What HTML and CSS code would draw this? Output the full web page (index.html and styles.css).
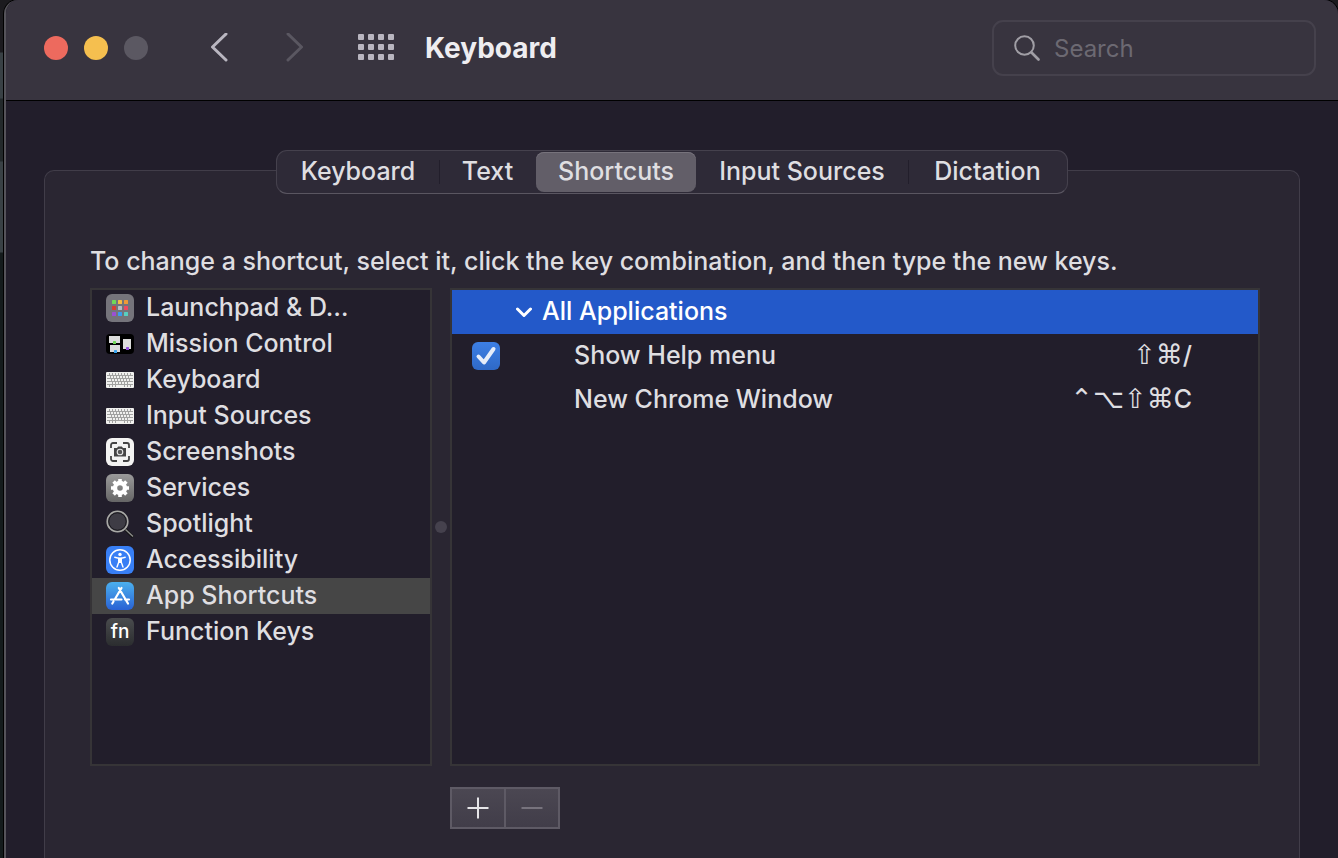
FILE: index.html
```
<!DOCTYPE html>
<html lang="en">
<head>
<meta charset="utf-8">
<title>Keyboard</title>
<link rel="stylesheet" href="styles.css">
</head>
<body>
<div class="window">
  <header class="titlebar">
    <div class="lights">
      <button class="light close" aria-label="Close"></button>
      <button class="light minimize" aria-label="Minimize"></button>
      <button class="light zoom" aria-label="Zoom" disabled></button>
    </div>
    <nav class="history">
      <button class="nav-btn" aria-label="Back"><svg width="20" height="30" viewBox="0 0 20 30"><path d="M17 1 3.500 14 17 27"/></svg></button>
      <button class="nav-btn forward" aria-label="Forward" disabled><svg width="20" height="30" viewBox="0 0 20 30"><path d="M3 1 16.500 14 3 27"/></svg></button>
    </nav>
    <button class="show-all" aria-label="Show all">
      <svg width="36" height="28" viewBox="0 0 36 28">
        <g id="dots"><rect width="6" height="6" rx="1"/><rect x="10" width="6" height="6" rx="1"/><rect x="20" width="6" height="6" rx="1"/><rect x="30" width="6" height="6" rx="1"/></g>
        <use href="#dots" y="10"/><use href="#dots" y="20"/>
      </svg>
    </button>
    <h1 class="title">Keyboard</h1>
    <label class="search">
      <svg width="26" height="26" viewBox="0 0 26 26"><circle cx="10.500" cy="10.500" r="9.300"/><path d="m17.500 17.500 7 7" stroke-width="2.600"/></svg>
      <input type="search" placeholder="Search" aria-label="Search">
    </label>
  </header>

  <main class="content">
    <section class="panel">
      <div class="tabs" role="tablist">
        <button class="tab" role="tab">Keyboard</button>
        <button class="tab divided" role="tab">Text</button>
        <button class="tab active" role="tab" aria-selected="true">Shortcuts</button>
        <button class="tab" role="tab">Input Sources</button>
        <button class="tab divided" role="tab">Dictation</button>
      </div>
      <p class="hint">To change a shortcut, select it, click the key combination, and then type the new keys.</p>

      <div class="split">
        <ul class="categories">
          <li class="category">
            <svg class="icon" viewBox="0 0 28 28"><rect width="28" height="28" rx="6" fill="#75747b"/>
              <rect x="6" y="6" width="4" height="4" rx=".5" fill="#70d957"/><rect x="12" y="6" width="4" height="4" rx=".5" fill="#f5bd43"/><rect x="18" y="6" width="4" height="4" rx=".5" fill="#f09a38"/>
              <rect x="6" y="12" width="4" height="4" rx=".5" fill="#d73c32"/><rect x="12" y="12" width="4" height="4" rx=".5" fill="#b9bcc4"/><rect x="18" y="12" width="4" height="4" rx=".5" fill="#ee4863"/>
              <rect x="6" y="18" width="4" height="4" rx=".5" fill="#9b50d4"/><rect x="12" y="18" width="4" height="4" rx=".5" fill="#3a9ef0"/><rect x="18" y="18" width="4" height="4" rx=".5" fill="#58cfc0"/></svg>
            <span>Launchpad &amp; D…</span></li>
          <li class="category">
            <svg class="icon" viewBox="0 0 28 28"><rect y="4" width="28" height="20" rx="4" fill="#000"/>
              <path d="M3 6h11v7H3zM4 15h10v7H4zM17 9h8v10h-8z" fill="#dcdcdc"/>
              <rect x="7" y="11" width="3" height="3" rx=".5" fill="#70d957"/><rect x="8" y="20" width="3" height="3" rx=".5" fill="#3aa4ee"/><rect x="20" y="17" width="3" height="3" rx=".5" fill="#9350dc"/></svg>
            <span>Mission Control</span></li>
          <li class="category">
            <svg class="icon" viewBox="0 0 28 28">
              <g id="kbd"><rect y="6" width="28" height="16" rx="1" fill="#f0f0ee"/>
              <g stroke="#8d8d8c" fill="none"><path d="M1 9.500h26M1 12.500h26M1 15.500h26M1 18.500h26" stroke-width=".8"/>
              <path d="M3.500 7v2M6.500 7v2M9.500 7v2M12.500 7v2M15.500 7v2M18.500 7v2M21.500 7v2M24.500 7v2M4.500 10v2M7.500 10v2M10.500 10v2M13.500 10v2M16.500 10v2M19.500 10v2M22.500 10v2M5.500 13v2M8.500 13v2M11.500 13v2M14.500 13v2M17.500 13v2M20.500 13v2M23.500 13v2M6.500 16v2M9.500 16v2M12.500 16v2M15.500 16v2M18.500 16v2M21.500 16v2M3.500 19v2M6.500 19v2M9.500 19v2M18.500 19v2M21.500 19v2M24.500 19v2" stroke-width=".8"/></g></g></svg>
            <span>Keyboard</span></li>
          <li class="category">
            <svg class="icon" viewBox="0 0 28 28"><use href="#kbd"/></svg>
            <span>Input Sources</span></li>
          <li class="category">
            <svg class="icon" viewBox="0 0 28 28"><rect width="28" height="28" rx="6" fill="#f3f3f2"/>
              <path d="M5 10V7a2 2 0 0 1 2-2h4M17 5h4a2 2 0 0 1 2 2v3M23 18v3a2 2 0 0 1-2 2h-4M11 23H7a2 2 0 0 1-2-2v-3" fill="none" stroke="#444" stroke-width="1.800"/>
              <path d="M8 10h3l1.200-1.500h3.600l1.200 1.500h3v8.500H8z" fill="#444"/><circle cx="14" cy="14" r="2.800" fill="#555" stroke="#e8e8e8" stroke-width="1.100"/></svg>
            <span>Screenshots</span></li>
          <li class="category">
            <svg class="icon" viewBox="0 0 28 28"><defs><linearGradient id="gray" x2="0" y2="1"><stop stop-color="#9a9a9a"/><stop offset="1" stop-color="#666"/></linearGradient></defs>
              <rect width="28" height="28" rx="6" fill="url(#gray)"/>
              <circle cx="14" cy="14" r="5" fill="none" stroke="#fff" stroke-width="4.400"/>
              <path d="M14 5v3M14 20v3M5 14h3M20 14h3M7.600 7.600l2.200 2.200M18.200 18.200l2.200 2.200M20.400 7.600l-2.200 2.200M9.800 18.200l-2.200 2.200" stroke="#fff" stroke-width="3.600"/></svg>
            <span>Services</span></li>
          <li class="category">
            <svg class="icon" viewBox="0 0 28 28"><path d="m19 19 8 8" stroke="#111" stroke-width="3"/><path d="m19.500 19.500 7.500 7" stroke="#8a8a88" stroke-width="1.500"/>
              <circle cx="11.500" cy="11.500" r="10.300" fill="#3e3c45" stroke="#a9a9a6" stroke-width="1.600"/><circle cx="11.500" cy="11.500" r="8.700" fill="none" stroke="#19181d"/></svg>
            <span>Spotlight</span></li>
          <li class="category">
            <svg class="icon" viewBox="0 0 28 28"><rect width="28" height="28" rx="6" fill="#387ff5"/>
              <circle cx="14" cy="14" r="10.200" fill="none" stroke="#fff" stroke-width="1.500"/><circle cx="14" cy="8.400" r="1.700" fill="#fff"/>
              <path d="m8.800 11.300 4 .9v3.800l-1.800 5M19.200 11.300l-4 .9v3.800l1.800 5" fill="none" stroke="#fff" stroke-width="1.400" stroke-linecap="round"/><path d="M12.200 11.500h3.600V17h-3.600z" fill="#fff"/></svg>
            <span>Accessibility</span></li>
          <li class="category selected">
            <svg class="icon" viewBox="0 0 28 28"><defs><linearGradient id="sky" x2="0" y2="1"><stop stop-color="#4bb0ee"/><stop offset="1" stop-color="#2962d4"/></linearGradient></defs>
              <rect width="28" height="28" rx="6" fill="url(#sky)"/>
              <path d="M12.800 6l9.200 15.500M15.500 6 9 17M5 17.500h10.500M19 17.500h4M7.500 19.500l-1.200 2" fill="none" stroke="#fff" stroke-width="2.200" stroke-linecap="round"/></svg>
            <span>App Shortcuts</span></li>
          <li class="category"><span class="icon fn">fn</span><span>Function Keys</span></li>
        </ul>

        <div class="divider"></div>

        <div class="detail">
          <table class="shortcuts">
            <colgroup><col class="col-check"><col class="col-name"><col class="col-keys"></colgroup>
            <tbody>
              <tr class="group"><td></td><td colspan="2"><div class="group-name"><svg width="16" height="14" viewBox="0 0 16 14"><path d="m1.500 5 6.500 6.500 6.500-6.500"/></svg><span>All Applications</span></div></td></tr>
              <tr><td><input class="check" id="help" type="checkbox" checked></td><td class="name"><label for="help">Show Help menu</label></td><td class="keys"><span class="sym">⇧⌘</span>/</td></tr>
              <tr><td></td><td class="name">New Chrome Window</td><td class="keys"><span class="sym">⌃⌥⇧⌘</span>C</td></tr>
            </tbody>
          </table>
        </div>

        <div class="actions">
          <button class="action" aria-label="Add"><svg width="22" height="22" viewBox="0 0 22 22"><path d="M11 0.500v21M0.500 11h21"/></svg></button>
          <button class="action" aria-label="Remove" disabled><svg width="22" height="22" viewBox="0 0 22 22"><path d="M0.500 11h21"/></svg></button>
        </div>
      </div>
    </section>
  </main>
</div>
</body>
</html>
```
FILE: styles.css
```
* { box-sizing: border-box; }
body {
  margin: 0;
  height: 100vh;
  overflow: hidden;
  padding-left: 4px;
  background: linear-gradient(#1c1b1f 52px, #394145 53px, #394145 98px, #23292b 99px, #23292b 161px, #394145 162px, #394145 252px, #141b1c 253px);
  font: 500 25px/36px Inter, "Liberation Sans", sans-serif;
  color: #dfdee1;
}
button { font: inherit; color: inherit; border: 0; padding: 0; background: none; }
svg { display: block; }

.window {
  display: flex;
  flex-direction: column;
  height: 100%;
  border-left: 2px solid #55535a;
  border-radius: 14px 14px 0 0;
  box-shadow: 0 0 0 1px #000;
  background: #221e2b;
  overflow: hidden;
}

.titlebar {
  display: flex;
  align-items: center;
  height: 101px;
  flex: none;
  padding: 0 22px 4px 38px;
  background: #38343f;
  border-bottom: 1px solid #000;
}
.lights { display: flex; gap: 16px; }
.light { width: 24px; height: 24px; border-radius: 50%; }
.close { background: #ed6a5e; }
.minimize { background: #f5bf4f; }
.zoom { background: #5b5862; }
.history { display: flex; gap: 56px; margin-left: 61px; }
.nav-btn svg { fill: none; stroke: #b9b6c0; stroke-width: 3; stroke-linecap: round; stroke-linejoin: round; }
.forward svg { stroke: #5a5761; }
.show-all { margin-left: 53px; }
.show-all svg { fill: #b9b6c0; }
.title { margin: 0 auto 0 31px; font-size: 28px; font-weight: 700; color: #eeedf0; }
.search {
  display: flex;
  align-items: center;
  gap: 14px;
  width: 324px;
  height: 56px;
  padding: 0 20px;
  border: 2px solid #45414c;
  border-radius: 11px;
}
.search svg { flex: none; fill: none; stroke: #a09ea5; stroke-width: 2; stroke-linecap: round; }
.search input { width: 100%; min-width: 0; padding: 2px 0 0; border: 0; outline: 0; background: none; font: inherit; font-size: 24px; font-weight: 400; color: #dfdee1; }
.search input::placeholder { color: #6c6972; opacity: 1; }

.content { flex: 1; display: flex; padding: 69px 38px 0; }
.panel {
  flex: 1;
  border: 1px solid #413d49;
  border-bottom: 0;
  border-radius: 10px 10px 0 0;
  background: #2a2632;
}
.tabs {
  position: relative;
  display: grid;
  grid-template-columns: 162px 97px 160px 212px 159px;
  width: max-content;
  height: 44px;
  margin: -21px auto 0;
  border: 1px solid #45414d;
  border-bottom-color: #5a5661;
  border-radius: 11px;
  background: #2e2a37;
}
.tab { position: relative; padding-bottom: 2px; }
.tab.active { margin: 1px 0; border-radius: 8px; background: #625e68; box-shadow: inset 0 1px #77737c; }
.divided::before { content: ""; position: absolute; left: 0; top: 9px; bottom: 9px; width: 1px; background: #221e2b; }
.hint { margin: 49px 45px 9px; white-space: nowrap; }

.split {
  display: grid;
  grid-template-columns: 342px 18px 1fr;
  grid-template-rows: 478px auto;
  row-gap: 21px;
  margin: 0 39px 0 45px;
}
.categories, .detail { margin: 0; padding: 0; border: 2px solid #363437; background: #221e2b; }
.categories { list-style: none; }
.category { display: flex; align-items: center; gap: 12px; height: 36px; padding-left: 14px; white-space: nowrap; }
.category > span:last-child { line-height: 34px; padding-bottom: 2px; }
.selected { background: #464646; }
.icon { width: 28px; height: 28px; flex: none; }
.fn { border-radius: 6px; background: linear-gradient(#4a4c4e, #2b2d2f); color: #fff; font-size: 19px; line-height: 28px; text-align: center; }
.divider { align-self: center; justify-self: center; width: 12px; height: 12px; border-radius: 50%; background: #45414d; }

.shortcuts { width: 100%; border-collapse: collapse; table-layout: fixed; }
.shortcuts td { height: 44px; padding: 0 0 2px; line-height: 36px; }
.col-check { width: 64px; }
.col-keys { width: 260px; }
.group { background: #2359c9; color: #fff; }
.group-name { display: flex; align-items: center; gap: 10px; }
.group-name svg { fill: none; stroke: #fff; stroke-width: 3; stroke-linecap: round; stroke-linejoin: round; }
.shortcuts .name { padding-left: 58px; }
.shortcuts .keys { padding-right: 66px; text-align: right; }
.sym { font: 400 27px/30px "DejaVu Sans", sans-serif; }
.check {
  display: block;
  appearance: none;
  width: 28px;
  height: 28px;
  margin: 2px 0 0 20px;
  border-radius: 6px;
  background: linear-gradient(#3d7fe4, #2f69c6);
}
.check:checked {
  background: url("data:image/svg+xml,%3Csvg xmlns='http://www.w3.org/2000/svg' viewBox='0 0 28 28'%3E%3Cpath d='M6.500 14.500 12 20.500 21.500 7' fill='none' stroke='%23e6edf9' stroke-width='4' stroke-linecap='round' stroke-linejoin='round'/%3E%3C/svg%3E"), linear-gradient(#3d7fe4, #2f69c6);
}

.actions { grid-column: 3; display: flex; width: max-content; border: 2px solid #5e5a65; background: linear-gradient(#4b4752, #413d49); }
.action { display: grid; place-items: center; width: 52px; height: 38px; }
.action + .action { width: 54px; border-left: 2px solid #5e5a65; }
.action svg { fill: none; stroke: #e6e5e8; stroke-width: 2; }
.action:disabled svg { stroke: #77737d; }
```
